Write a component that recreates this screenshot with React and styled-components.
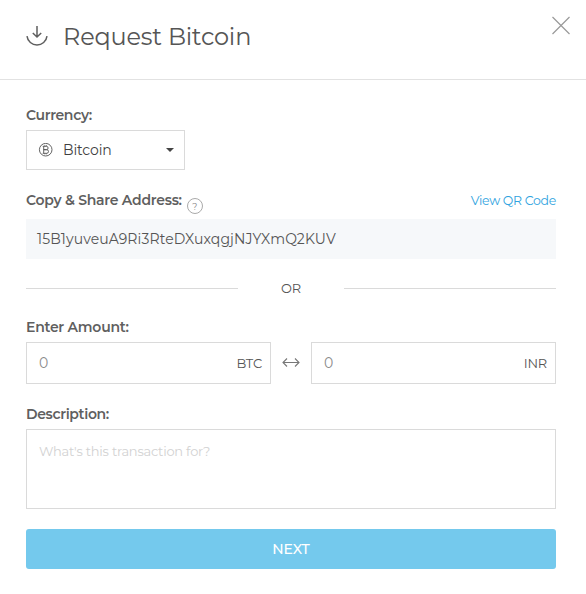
import React, { Component } from 'react';
import styled, { createGlobalStyle } from 'styled-components';

const GlobalStyle=createGlobalStyle`
    * {
        box-sizing: border-box;
    }

    body {
        margin: 0;
        background-color: #FFFFFF;
        color: #555555;
        font-family: Montserrat, Inter, sans-serif;
        font-size: 14px;
    }

    input, textarea, button {
        font-family: inherit;
    }
`;

const Modal=styled.div`
    width: 586px;
    height: 594px;
    overflow: hidden;
`;

const Header=styled.header`
    display: flex;
    height: 80px;
    padding: 0 16px 6px 26px;
    align-items: center;
    border-bottom: 1px solid #E2E2E2;

    h1 {
        margin: 0 auto 0 14px;
        font-size: 24px;
        line-height: 32px;
        font-weight: 400;
        letter-spacing: -0.2px;
    }
`;

const CloseButton=styled.button`
    display: flex;
    align-self: flex-start;
    margin-top: 15px;
    padding: 0;
    border: 0;
    background: none;
    cursor: pointer;
`;

const Form=styled.form`
    display: flex;
    flex-direction: column;
    padding: 20px 30px 0 26px;
`;

const LabelRow=styled.div`
    display: flex;
    height: ${props => props.height || "30px"};
    margin-top: ${props => props.gap || "0"};
    align-items: center;
`;

const Label=styled.label`
    color: #5F5F5F;
    font-weight: 600;
    letter-spacing: ${props => props.spacing || "-0.25px"};
`;

const HelpIcon=styled.span`
    display: flex;
    width: 16px;
    height: 16px;
    margin: 12px 0 0 5px;
    align-items: center;
    justify-content: center;
    border: 1px solid #AAAAAA;
    border-radius: 100%;
    color: #888888;
    font-size: 9px;
`;

const QrLink=styled.a`
    margin-left: auto;
    color: #2FA3E0;
    font-size: 12.5px;
    letter-spacing: -0.3px;
    cursor: pointer;
`;

const CurrencySelect=styled.div`
    display: flex;
    width: 159px;
    height: 40px;
    padding: 0 10px 0 11px;
    align-items: center;
    border: 1px solid #DADADA;
    color: #3F3F3F;
    cursor: pointer;

    span {
        margin: 0 auto 0 10px;
        letter-spacing: -0.1px;
    }
`;

const Caret=styled.i`
    border-top: 4px solid #444444;
    border-left: 4px solid transparent;
    border-right: 4px solid transparent;
`;

const Address=styled.div`
    height: 40px;
    padding-left: 11px;
    background-color: #F6F8FA;
    line-height: 40px;
    letter-spacing: 0.1px;
`;

const Divider=styled.div`
    display: flex;
    height: 21px;
    margin: 19px 0 13px;
    align-items: center;
    justify-content: space-between;
    font-size: 13px;
    letter-spacing: -0.2px;

    span {
        padding-bottom: 2px;
    }

    &:before, &:after {
        content: "";
        width: 212px;
        height: 1px;
        background-color: #DADADA;
    }
`;

const AmountRow=styled.div`
    display: flex;
    align-items: center;
    justify-content: space-between;
`;

const AmountBox=styled.div`
    display: flex;
    width: 245px;
    height: 42px;
    padding: 0 8px 0 12px;
    align-items: center;
    border: 1px solid #DADADA;
    font-size: 13px;
    letter-spacing: -0.2px;

    input {
        flex: 1;
        min-width: 0;
        padding: 0;
        border: 0;
        outline: 0;
        font-size: 14px;
    }

    input::placeholder {
        color: #8C8C8C;
    }
`;

const Description=styled.textarea`
    display: block;
    height: 80px;
    padding: 13px 12px;
    border: 1px solid #DADADA;
    outline: 0;
    resize: none;
    font-size: 13px;
    line-height: 17px;
    letter-spacing: -0.23px;

    &::placeholder {
        color: #D2D2D2;
    }
`;

const NextButton=styled.button`
    height: 40px;
    margin-top: 20px;
    padding: 0;
    border: 0;
    border-radius: 3px;
    background-color: #74C9ED;
    color: #FFFFFF;
    font-size: 14px;
    font-weight: 500;
    letter-spacing: -0.1px;
    cursor: pointer;
`;

const ReceiveIcon=() => (
    <svg width="23" height="23" viewBox="0 0 23 23" fill="none" stroke="#5F5F5F" strokeWidth="1.5">
        <path d="M11 1v11M6.8 8l4.2 4 4.2-4M1 11.2C1.6 16.4 6 20 11 20S20.4 16.4 21 11.2" />
    </svg>
);

const CloseIcon=() => (
    <svg width="20" height="20" viewBox="0 0 20 20" fill="none" stroke="#999999" strokeWidth="1.2">
        <path d="M2.5 2l17 17M19.5 2l-17 17" />
    </svg>
);

const BitcoinIcon=() => (
    <svg width="15" height="15" viewBox="0 0 15 15" fill="none" stroke="#555555" strokeWidth="0.9">
        <circle cx="7.7" cy="6.7" r="6.3" />
        <path d="M4.7 3.3h3.7a1.7 1.7 0 0 1 0 3.4H5.7h3a1.8 1.8 0 0 1 0 3.6h-4M5.7 3.3v7M6.8 2.3v1M8.4 2.3v1M6.8 10.3v1M8.4 10.3v1" />
    </svg>
);

const SwapIcon=() => (
    <svg width="18" height="12" viewBox="0 0 18 12" fill="none" stroke="#777777" strokeWidth="1.1">
        <path d="M1 5.5h16M5 1.5l-4 4 4 4M13 1.5l4 4-4 4" />
    </svg>
);

export default class App extends Component {
    render() {
        return (
            <Modal>
                <GlobalStyle />
                <Header>
                    <ReceiveIcon />
                    <h1>Request Bitcoin</h1>
                    <CloseButton type="button"><CloseIcon /></CloseButton>
                </Header>
                <Form>
                    <LabelRow>
                        <Label spacing="-0.35px">Currency:</Label>
                    </LabelRow>
                    <CurrencySelect>
                        <BitcoinIcon />
                        <span>Bitcoin</span>
                        <Caret />
                    </CurrencySelect>
                    <LabelRow height="38px" gap="11px">
                        <Label>Copy &amp; Share Address:</Label>
                        <HelpIcon>?</HelpIcon>
                        <QrLink>View QR Code</QrLink>
                    </LabelRow>
                    <Address>15B1yuveuA9Ri3RteDXuxqgjNJYXmQ2KUV</Address>
                    <Divider><span>OR</span></Divider>
                    <LabelRow>
                        <Label htmlFor="btc">Enter Amount:</Label>
                    </LabelRow>
                    <AmountRow>
                        <AmountBox>
                            <input id="btc" placeholder="0" />
                            BTC
                        </AmountBox>
                        <SwapIcon />
                        <AmountBox>
                            <input placeholder="0" />
                            INR
                        </AmountBox>
                    </AmountRow>
                    <LabelRow gap="15px">
                        <Label htmlFor="description" spacing="-0.35px">Description:</Label>
                    </LabelRow>
                    <Description id="description" placeholder="What's this transaction for?" />
                    <NextButton type="button">NEXT</NextButton>
                </Form>
            </Modal>
        );
    }
}
